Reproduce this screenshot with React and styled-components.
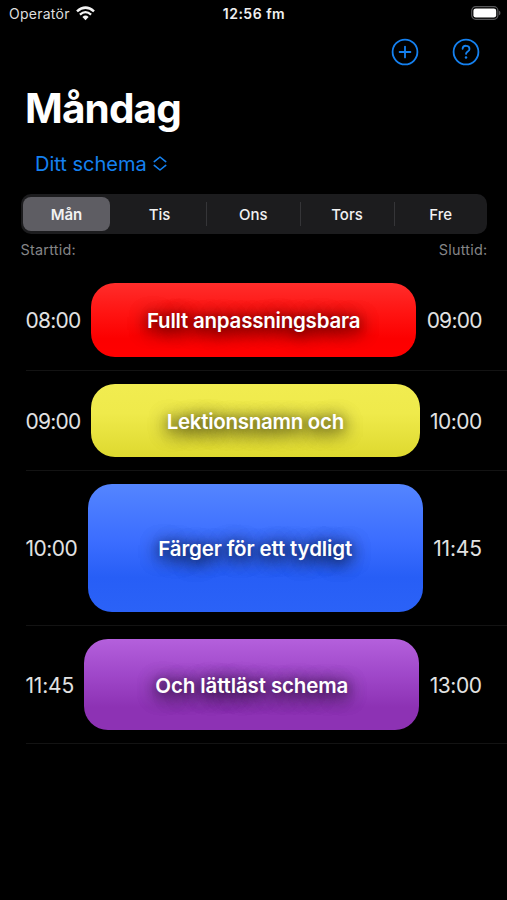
import React from "react";
import styled, { createGlobalStyle } from "styled-components";

const GlobalStyle = createGlobalStyle`
  * { box-sizing: border-box; }
  body {
    margin: 0;
    background: #000;
    color: #fff;
    font-family: Inter, "Liberation Sans", sans-serif;
  }
`;

const Screen = styled.main`
  width: 507px;
  height: 900px;
  overflow: hidden;
  background: #000;
`;

const StatusBar = styled.header`
  display: grid;
  grid-template-columns: 1fr auto 1fr;
  align-items: center;
  height: 28px;
  padding: 0 6px 0 9px;
  font-size: 14px;
  line-height: 28px;
`;

const Carrier = styled.div`
  display: flex;
  align-items: center;
  gap: 6px;
  color: #dedede;
  letter-spacing: 0.25px;
`;

const Clock = styled.time`
  color: #f0f0f0;
  font-weight: 600;
  letter-spacing: 0.5px;
  margin-right: 2px;
`;

const BatteryIcon = styled.svg`
  display: block;
  justify-self: end;
  margin-bottom: 2px;
`;

const Toolbar = styled.nav`
  display: flex;
  justify-content: flex-end;
  gap: 33px;
  height: 56px;
  padding: 10px 26.7px 0 0;
`;

const IconButton = styled.button`
  width: 28px;
  height: 28px;
  padding: 0;
  border: 0;
  background: none;
  color: #1581f0;

  svg { display: block; }
`;

const Title = styled.h1`
  height: 62px;
  margin: 0;
  padding: 0 0 0 25px;
  font-size: 40.5px;
  line-height: 50px;
  font-weight: 700;
  letter-spacing: -0.85px;
`;

const SchedulePicker = styled.button`
  display: flex;
  align-items: center;
  gap: 6px;
  height: 36px;
  margin: 0 0 12px 35px;
  padding: 0;
  border: 0;
  background: none;
  color: #1581f0;
  font: 400 20px/36px Inter, sans-serif;
  letter-spacing: 0;
  white-space: nowrap;
`;

const Segments = styled.div`
  display: grid;
  grid-template-columns: 92px 93px 93.5px 94px 1fr;
  width: 466px;
  height: 40px;
  margin-left: 21px;
  padding: 3px 0;
  border-radius: 10px;
  background: #1c1c1e;
`;

const Segment = styled.button`
  display: flex;
  align-items: center;
  justify-content: center;
  margin: ${(p) => (p.$active ? "0 3px 0 2px" : "5px 0")};
  padding: 1px 0 0;
  border: 0;
  border-left: ${(p) => (p.$divided ? "1px solid #353538" : "0")};
  border-radius: ${(p) => (p.$active ? "8px" : "0")};
  background: ${(p) => (p.$active ? "#5e5d63" : "transparent")};
  color: #f2f2f2;
  font: ${(p) => (p.$active ? 600 : 500)} 15px/20px Inter, sans-serif;
`;

const ColumnLabels = styled.div`
  display: flex;
  justify-content: space-between;
  height: 36px;
  padding: 6px 19.5px 0 20.5px;
  color: #858587;
  font-size: 14.4px;
  line-height: 20px;
  letter-spacing: 0.25px;
`;

const Lesson = styled.section`
  display: flex;
  align-items: center;
  gap: 10.5px;
  height: ${(p) => p.$height}px;
  margin-left: 25.5px;
  padding: 13px 25.3px 13px 0;
  border-bottom: 1px solid #131313;
`;

const Time = styled.time`
  flex: 0 0 ${(p) => p.$width}px;
  padding-top: 2px;
  color: #e2e2e2;
  font-size: 21px;
  line-height: 24px;
  white-space: nowrap;
  letter-spacing: ${(p) => p.$tracking}px;
`;

const LessonCard = styled.div`
  display: flex;
  flex: 1;
  align-items: center;
  justify-content: center;
  height: 100%;
  padding-top: 1px;
  border-radius: 24px;
  background: linear-gradient(${(p) => p.$colors});
  color: #fff;
  font-size: 20.5px;
  font-weight: 600;
  letter-spacing: ${(p) => p.$tracking}px;
  text-shadow: 0 3px 18px rgba(0, 0, 0, 0.8), 0 3px 18px rgba(0, 0, 0, 0.7), 0 1px 6px rgba(0, 0, 0, 0.15);
  white-space: nowrap;
`;

const days = ["Mån", "Tis", "Ons", "Tors", "Fre"];

const digits = {
  "08:00": [55, -0.75],
  "09:00": [55, -0.75],
  "10:00": [51.5, -0.55],
  "11:45": [48.3, -0.2],
  "13:00": [51.5, -0.4],
};

const lessons = [
  { start: "08:00", end: "09:00", name: "Fullt anpassningsbara", height: 101, colors: "#ff2d2b, #ff1412 40%, #fc0000 75%, #ff0000", tracking: -0.22 },
  { start: "09:00", end: "10:00", name: "Lektionsnamn och", height: 100, colors: "#f1ec50, #efea4b 40%, #ded92f", tracking: -0.28 },
  { start: "10:00", end: "11:45", name: "Färger för ett tydligt", height: 155, colors: "#5485ff, #3b6dff 45%, #275ef6 73%, #2b62f7", tracking: -0.13 },
  { start: "11:45", end: "13:00", name: "Och lättläst schema", height: 118, colors: "#b460dc, #a048ca 38%, #8d32b4 75%, #8d32b4", tracking: -0.13 },
];

function WifiIcon() {
  return (
    <svg width="19" height="16" viewBox="0 0 19 16" fill="none" stroke="#f4f4f4">
      <path d="M1 5.4Q9.5-2.1 18 5.4" strokeWidth="2.5" />
      <path d="M3.9 8.6Q9.5 3.7 15.1 8.6" strokeWidth="2.3" />
      <path d="M6.4 11Q9.5 8.2 12.6 11L9.5 14.2Z" fill="#f4f4f4" stroke="none" />
    </svg>
  );
}

function Battery() {
  return (
    <BatteryIcon width="30" height="14" viewBox="0 0 30 14">
      <rect x="0.7" y="0.7" width="26.2" height="12.6" rx="4" fill="none" stroke="#58585a" strokeWidth="1.2" />
      <rect x="2.4" y="2.4" width="22.8" height="9.2" rx="2.4" fill="#fff" />
      <path d="M28 4.8v4.5q1.5-.6 1.5-2.25T28 4.8Z" fill="#58585a" />
    </BatteryIcon>
  );
}

function CircleIcon({ children }) {
  return (
    <svg width="28" height="28" viewBox="0 0 28 28" fill="none" stroke="currentColor" strokeWidth="1.8" strokeLinecap="round" strokeLinejoin="round">
      <circle cx="14" cy="14" r="12.4" />
      {children}
    </svg>
  );
}

export default function App() {
  return (
    <>
      <GlobalStyle />
      <Screen>
        <StatusBar>
          <Carrier>Operatör <WifiIcon /></Carrier>
          <Clock>12:56 fm</Clock>
          <Battery />
        </StatusBar>
        <Toolbar>
          <IconButton aria-label="Lägg till">
            <CircleIcon><path d="M8.6 14h10.8M14 8.6v10.8" /></CircleIcon>
          </IconButton>
          <IconButton aria-label="Hjälp">
            <CircleIcon>
              <path d="M10.6 10.8c.1-4.1 6.9-4 6.9.1 0 2.6-3.4 2.5-3.5 5" />
              <circle cx="14" cy="19.5" r="1.25" fill="currentColor" stroke="none" />
            </CircleIcon>
          </IconButton>
        </Toolbar>
        <Title>Måndag</Title>
        <SchedulePicker>
          Ditt schema
          <svg width="14" height="16" viewBox="0 0 14 16" fill="none" stroke="currentColor" strokeWidth="1.6" strokeLinecap="round" strokeLinejoin="round">
            <path d="M1.3 5.6 7 1 12.7 5.6M1.3 9.4 7 14 12.7 9.4" />
          </svg>
        </SchedulePicker>
        <Segments>
          {days.map((day, i) => (
            <Segment key={day} $active={i === 0} $divided={i > 1}>{day}</Segment>
          ))}
        </Segments>
        <ColumnLabels><span>Starttid:</span><span>Sluttid:</span></ColumnLabels>
        {lessons.map((l) => (
          <Lesson key={l.name} $height={l.height}>
            <Time $width={digits[l.start][0]} $tracking={digits[l.start][1]}>{l.start}</Time>
            <LessonCard $colors={l.colors} $tracking={l.tracking}>{l.name}</LessonCard>
            <Time $width={digits[l.end][0]} $tracking={digits[l.end][1]}>{l.end}</Time>
          </Lesson>
        ))}
      </Screen>
    </>
  );
}
